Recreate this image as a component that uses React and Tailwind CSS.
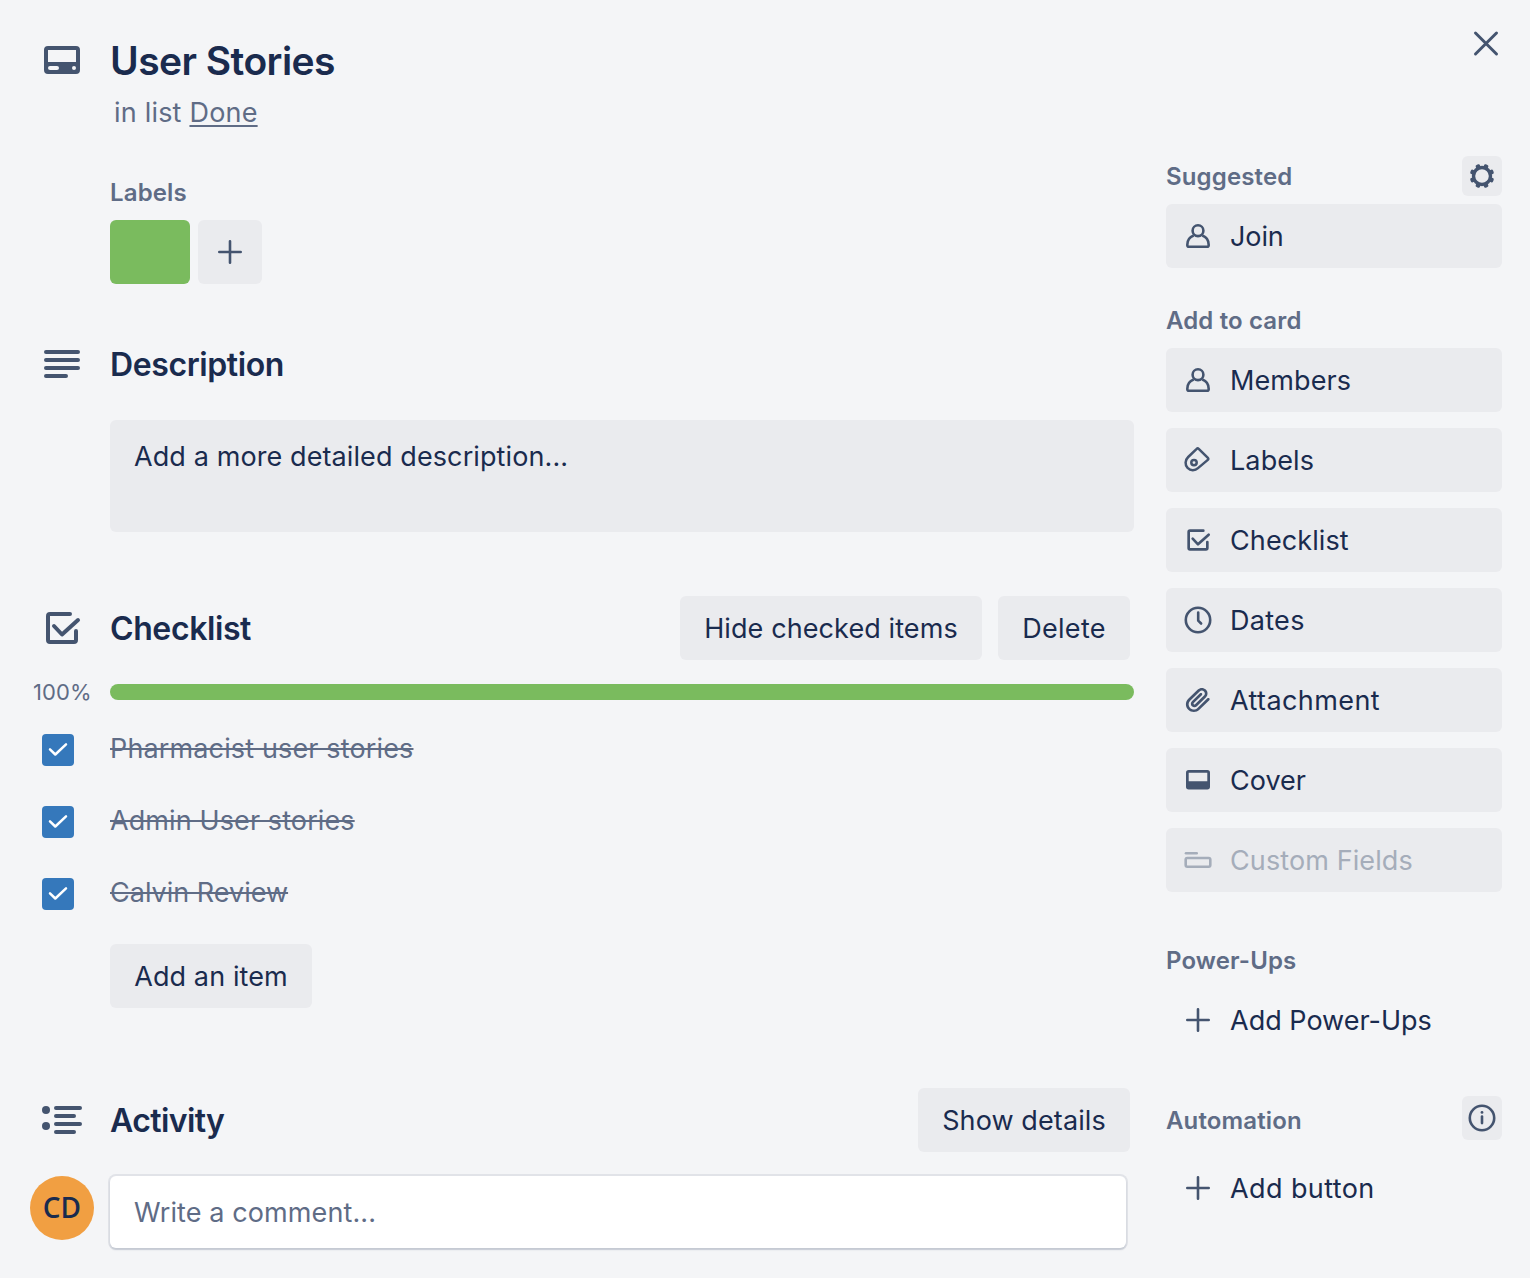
import React from "react";

const ink = "text-[#1a2b4e]";

function Svg({ size, box = 48, className = "", children }) {
  return (
    <svg width={size} height={size} viewBox={`0 0 ${box} ${box}`} fill="none" className={`block shrink-0 ${className}`}>
      {children}
    </svg>
  );
}

function CardIcon() {
  return (
    <Svg size={48}>
      <path
        fill="currentColor"
        fillRule="evenodd"
        d="M10 10h28a4 4 0 0 1 4 4v20a4 4 0 0 1-4 4H10a4 4 0 0 1-4-4V14a4 4 0 0 1 4-4zM10 14v12h28V14zM12 30a2 2 0 0 0 0 4h7a2 2 0 0 0 0-4zM36 30a2 2 0 1 0 0 4a2 2 0 0 0 0-4z"
      />
    </Svg>
  );
}

function DescriptionIcon() {
  return (
    <Svg size={48}>
      <path stroke="currentColor" strokeWidth="4" strokeLinecap="round" d="M8 12h32M8 20h32M8 28h32M8 36h20" />
    </Svg>
  );
}

function ActivityIcon() {
  return (
    <Svg size={48}>
      <circle cx="8" cy="14" r="4" fill="currentColor" />
      <circle cx="8" cy="30" r="4" fill="currentColor" />
      <path stroke="currentColor" strokeWidth="4" strokeLinecap="round" d="M18 12h24M18 20h18M18 28h24M18 36h18" />
    </Svg>
  );
}

function ChecklistIcon({ size }) {
  return (
    <Svg size={size}>
      <g stroke="currentColor" strokeWidth="4" strokeLinecap="round" strokeLinejoin="round">
        <path d="M32 10H12a2 2 0 0 0-2 2v24a2 2 0 0 0 2 2h24a2 2 0 0 0 2-2V27" />
        <path d="M16 22l8 8.500L40 16" />
      </g>
    </Svg>
  );
}

function PersonIcon() {
  return (
    <Svg size={32} box={32}>
      <g stroke="currentColor" strokeWidth="2.600" strokeLinejoin="round">
        <circle cx="16" cy="10.700" r="5.400" />
        <path d="M11.700 15.500C7.600 17 5.300 20.500 5.300 24.900c0 1.200.5 1.800 1.600 1.800h18.200c1.100 0 1.600-.6 1.600-1.800 0-4.400-2.300-7.900-6.400-9.400" />
      </g>
    </Svg>
  );
}

function LabelIcon() {
  return (
    <Svg size={32} box={32}>
      <g stroke="currentColor" strokeWidth="2.500" strokeLinejoin="round">
        <path d="M14.700 4.900L6.200 13C3 16.100 2.700 20.800 5.600 23.900c2.900 2.900 7.400 3 10.400.2l9.800-8.200c.7-.6.700-1.400.1-2L16.700 4.900c-.6-.6-1.400-.6-2 0z" />
        <circle cx="12" cy="18.600" r="2.700" />
      </g>
    </Svg>
  );
}

function ClockIcon() {
  return (
    <Svg size={32} box={32}>
      <g stroke="currentColor" strokeWidth="2.600" strokeLinecap="round" strokeLinejoin="round">
        <circle cx="16" cy="16" r="12.200" />
        <path d="M16.200 8.600v8l2.900 2.900" />
      </g>
    </Svg>
  );
}

function AttachmentIcon() {
  return (
    <Svg size={32} box={24}>
      <path
        fill="currentColor"
        d="M11.6426 17.9647C10.1123 19.46 7.62736 19.4606 6.10092 17.9691C4.57505 16.4781 4.57769 14.0467 6.10253 12.5566L13.2505 5.57184C14.1476 4.6952 15.5861 4.69251 16.4832 5.56921C17.3763 6.44184 17.3778 7.83887 16.4869 8.7095L9.78361 15.2595C9.51948 15.5175 9.09671 15.5175 8.83311 15.2599C8.56835 15.0012 8.56921 14.5812 8.83502 14.3214L14.8933 8.40163C15.2884 8.01557 15.2957 7.38242 14.9096 6.98735C14.5236 6.59226 13.8904 6.58494 13.4954 6.971L7.43703 12.8908C6.37022 13.9333 6.36694 15.6465 7.43521 16.6903C8.48447 17.7156 10.1304 17.7156 11.1815 16.69L17.8848 10.1401C19.5804 8.48321 19.5769 5.79562 17.8808 4.13862C16.2067 2.50334 13.5266 2.50343 11.8525 4.14127L4.70461 11.1261C2.37263 13.4048 2.36844 17.1205 4.70299 19.4017C7.00926 21.6552 10.7316 21.6549 13.0404 19.3988L20.4526 12.1561C20.8475 11.7701 20.8548 11.137 20.4688 10.742C20.0827 10.347 19.4495 10.3397 19.0545 10.7258L11.6426 17.9647Z"
      />
    </Svg>
  );
}

function CoverIcon() {
  return (
    <Svg size={32} box={32}>
      <path
        fill="currentColor"
        fillRule="evenodd"
        d="M6.700 6h18.600A2.700 2.700 0 0 1 28 8.700v14a2.700 2.700 0 0 1-2.700 2.700H6.700A2.700 2.700 0 0 1 4 22.700V8.700A2.700 2.700 0 0 1 6.700 6zM6.700 8.700v8.600h18.600V8.700z"
      />
    </Svg>
  );
}

function CustomFieldsIcon() {
  return (
    <Svg size={32} box={32}>
      <g stroke="currentColor" strokeWidth="2.600" strokeLinecap="round">
        <path d="M4 9.300h10.700" />
        <rect x="3.700" y="14" width="24.600" height="8.700" rx="1.600" />
      </g>
    </Svg>
  );
}

function PlusIcon() {
  return (
    <Svg size={32} box={32}>
      <path stroke="currentColor" strokeWidth="2.600" strokeLinecap="round" d="M16 5.300v21.400M5.300 16h21.400" />
    </Svg>
  );
}

function GearIcon() {
  const teeth = [22.5, 67.5, 112.5, 157.5, 202.5, 247.5, 292.5, 337.5];
  return (
    <Svg size={32} box={32}>
      <circle cx="16" cy="16" r="8.500" stroke="currentColor" strokeWidth="3.400" />
      {teeth.map((a) => (
        <rect key={a} x="13.700" y="3.700" width="4.600" height="5" rx="1.500" fill="currentColor" transform={`rotate(${a} 16 16)`} />
      ))}
    </Svg>
  );
}

function InfoIcon() {
  return (
    <Svg size={32} box={32}>
      <circle cx="16" cy="16" r="12.200" stroke="currentColor" strokeWidth="2.600" />
      <circle cx="16" cy="10.400" r="1.400" fill="currentColor" />
      <path d="M16 14.500v6.600" stroke="currentColor" strokeWidth="2.600" strokeLinecap="round" />
    </Svg>
  );
}

function Button({ children, className = "" }) {
  return (
    <button className={`flex h-16 shrink-0 items-center justify-center rounded-[6px] bg-[#eaebee] pt-[2px] ${ink} ${className}`}>
      {children}
    </button>
  );
}

function SectionHeader({ icon, title, children }) {
  return (
    <div className="flex h-16 items-center">
      <div className="w-[72px] shrink-0 text-[#44546f]">{icon}</div>
      <h2 className={`grow pt-[2px] text-[32px] leading-10 font-semibold tracking-[-0.4px] ${ink}`}>{title}</h2>
      <div className="flex gap-4 pr-1">{children}</div>
    </div>
  );
}

function SmallHeading({ children, className = "" }) {
  return (
    <h3 className={`text-[24px] leading-[42px] font-semibold tracking-[0.14px] text-[#5f6c86] ${className}`}>
      {children}
    </h3>
  );
}

function CheckItem({ children }) {
  return (
    <li className="flex h-[72px] items-start">
      <span className="mt-[2px] ml-1 flex size-8 items-center justify-center rounded-[4px] bg-[#3578bb]">
        <Svg size={32} box={32}>
          <path d="M8 15.300l5.300 5.200L24 10.300" stroke="#fff" strokeWidth="2.500" strokeLinecap="round" strokeLinejoin="round" />
        </Svg>
      </span>
      <span className="ml-9 leading-[34px] text-[#5f6c86] line-through decoration-2">{children}</span>
    </li>
  );
}

function SideButton({ icon, label, plain, disabled, spacing = "" }) {
  const tone = disabled ? "text-[#a5adba]" : ink;
  const iconTone = disabled ? "text-[#a5adba]" : "text-[#44546f]";
  return (
    <button className={`flex h-16 w-full items-center gap-4 rounded-[6px] pl-4 ${plain ? "" : "bg-[#eaebee]"} ${tone}`}>
      <span className={iconTone}>{icon}</span>
      <span className={`pt-[2px] ${spacing}`}>{label}</span>
    </button>
  );
}

export default function App() {
  return (
    <div className="flex h-[1278px] w-[1530px] overflow-hidden bg-[#f4f5f7] font-['Inter','Liberation_Sans',sans-serif] text-[27px] leading-8 tracking-[0.1px]">
      <main className="w-[1134px] shrink-0 pl-[38px]">
        <header className="flex pt-9">
          <div className="w-[72px] shrink-0 text-[#44546f]">
            <CardIcon />
          </div>
          <div>
            <h1 className={`text-[39px] leading-[50px] font-semibold tracking-[-0.55px] ${ink}`}>User Stories</h1>
            <p className="mt-[11px] ml-1 tracking-[0.2px] text-[#5f6c86]">
              in list <a className="underline decoration-2 underline-offset-[3px]">Done</a>
            </p>
          </div>
        </header>

        <section className="mt-[43px] pl-[72px]">
          <SmallHeading>Labels</SmallHeading>
          <div className="mt-[6px] flex gap-2">
            <span className="h-16 w-20 rounded-[6px] bg-[#7abb5e]" />
            <button className="flex size-16 items-center justify-center rounded-[6px] bg-[#eaebee] text-[#44546f]">
              <PlusIcon />
            </button>
          </div>
        </section>

        <section className="mt-12">
          <SectionHeader icon={<DescriptionIcon />} title="Description" />
          <div className={`mt-6 ml-[72px] h-28 rounded-[6px] bg-[#eaebee] px-6 py-[21px] ${ink}`}>
            Add a more detailed description...
          </div>
        </section>

        <section className="mt-16">
          <SectionHeader icon={<ChecklistIcon size={48} />} title="Checklist">
            <Button className="w-[302px]">Hide checked items</Button>
            <Button className="w-[132px] tracking-[0.3px]">Delete</Button>
          </SectionHeader>
          <div className="mt-6 flex h-4 items-center">
            <span className="-ml-[5px] w-[77px] text-[22px] text-[#5f6c86]">100%</span>
            <div className="h-4 grow rounded-full bg-[#7abb5e]" />
          </div>
          <ul className="mt-8">
            <CheckItem>
              <span className="tracking-[0.14px]">Pharmacist user stories</span>
            </CheckItem>
            <CheckItem>Admin User stories</CheckItem>
            <CheckItem>
              <span className="tracking-normal">Calvin Review</span>
            </CheckItem>
          </ul>
          <Button className="-mt-1 ml-[72px] w-[202px]">Add an item</Button>
        </section>

        <section className="mt-20">
          <SectionHeader icon={<ActivityIcon />} title={<span className="tracking-[-0.6px]">Activity</span>}>
            <Button className="w-[212px]">Show details</Button>
          </SectionHeader>
          <div className="-ml-2 flex pt-6">
            <span className="flex size-16 items-center justify-center rounded-full bg-[#f19f42] pb-[2px] font-['Open_Sans','Noto_Sans',sans-serif] text-[28px] font-semibold text-[#1a2b4e]">
              CD
            </span>
            <div className="ml-4 flex h-[72px] w-[1016px] items-center rounded-[6px] bg-white px-6 pt-[2px] text-[#5f6c86] shadow-[0_2px_2px_rgba(9,30,66,0.13),0_0_0_2px_rgba(9,30,66,0.08)]">
              Write a comment...
            </div>
          </div>
        </section>
      </main>

      <aside className="ml-8 w-[336px] shrink-0">
        <div className="flex h-[156px] justify-end pt-7">
          <Svg size={32} box={32} className="text-[#44546f]">
            <path d="M5.500 5l21 21M26.500 5l-21 21" stroke="currentColor" strokeWidth="3" strokeLinecap="round" />
          </Svg>
        </div>

        <div className="flex h-10 justify-between">
          <SmallHeading>Suggested</SmallHeading>
          <button className="flex size-10 items-center justify-center rounded-[6px] bg-[#eaebee] text-[#44546f]">
            <GearIcon />
          </button>
        </div>
        <div className="mt-2">
          <SideButton icon={<PersonIcon />} label="Join" spacing="tracking-[-0.1px]" />
        </div>

        <div className="mt-8 h-10">
          <SmallHeading>Add to card</SmallHeading>
        </div>
        <div className="mt-2 flex flex-col gap-4">
          <SideButton icon={<PersonIcon />} label="Members" />
          <SideButton icon={<LabelIcon />} label="Labels" />
          <SideButton icon={<ChecklistIcon size={32} />} label="Checklist" />
          <SideButton icon={<ClockIcon />} label="Dates" spacing="tracking-[0.3px]" />
          <SideButton icon={<AttachmentIcon />} label="Attachment" spacing="tracking-[0.4px]" />
          <SideButton icon={<CoverIcon />} label="Cover" spacing="tracking-normal" />
          <SideButton icon={<CustomFieldsIcon />} label="Custom Fields" disabled />
        </div>

        <div className="mt-12 h-10">
          <SmallHeading>Power-Ups</SmallHeading>
        </div>
        <div className="mt-2">
          <SideButton icon={<PlusIcon />} label="Add Power-Ups" spacing="tracking-normal" plain />
        </div>

        <div className="mt-11 flex h-11 justify-between">
          <SmallHeading className="pt-1">Automation</SmallHeading>
          <button className="flex h-11 w-10 items-center justify-center rounded-[6px] bg-[#eaebee] text-[#44546f]">
            <InfoIcon />
          </button>
        </div>
        <div className="mt-4">
          <SideButton icon={<PlusIcon />} label="Add button" spacing="tracking-[0.4px]" plain />
        </div>
      </aside>
    </div>
  );
}
